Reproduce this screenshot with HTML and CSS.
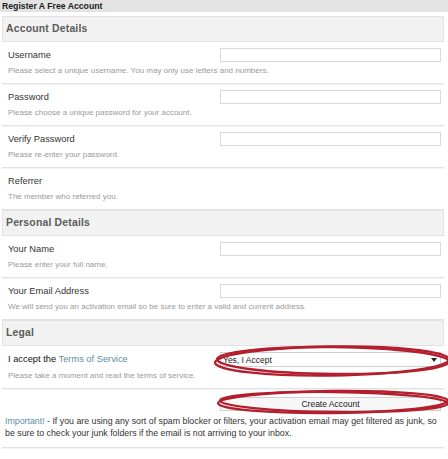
FILE: index.html
```html
<!DOCTYPE html>
<html>
<head>
<meta charset="utf-8">
<title>Register A Free Account</title>
<link rel="stylesheet" href="styles.css">
</head>
<body>
<div class="page">
  <div class="titlebar">Register A Free Account</div>
  <form class="form">
    <div class="section-head">Account Details</div>
    <div class="row">
      <label class="label">Username</label>
      <input class="field" type="text">
      <p class="desc">Please select a unique username. You may only use letters and numbers.</p>
    </div>
    <div class="row">
      <label class="label">Password</label>
      <input class="field" type="password">
      <p class="desc">Please choose a unique password for your account.</p>
    </div>
    <div class="row">
      <label class="label">Verify Password</label>
      <input class="field" type="password">
      <p class="desc">Please re-enter your password.</p>
    </div>
    <div class="row">
      <label class="label">Referrer</label>
      <p class="desc">The member who referred you.</p>
    </div>

    <div class="section-head">Personal Details</div>
    <div class="row">
      <label class="label">Your Name</label>
      <input class="field" type="text">
      <p class="desc">Please enter your full name.</p>
    </div>
    <div class="row">
      <label class="label">Your Email Address</label>
      <input class="field" type="text">
      <p class="desc">We will send you an activation email so be sure to enter a valid and current address.</p>
    </div>

    <div class="section-head legal-head">Legal</div>
    <div class="row legal-row">
      <label class="label strong">I accept the <span class="link">Terms of Service</span></label>
      <div class="select"><span>Yes, I Accept</span><span class="arrow"></span></div>
      <p class="desc">Please take a moment and read the terms of service.</p>
    </div>
    <div class="submit-row">
      <div class="btn-wrap"><button class="btn" type="button">Create Account</button></div>
      <p class="note"><span class="link">Important!</span> - If you are using any sort of spam blocker or filters, your activation email may get filtered as junk, so be sure to check your junk folders if the email is not arriving to your inbox.</p>
    </div>
  </form>
  <svg class="annot" width="448" height="459" viewBox="0 0 448 459">
    <g fill="none" stroke="#b31f2e" stroke-width="2.4">
      <ellipse cx="332" cy="361" rx="117" ry="14.5" transform="rotate(-0.8 332 361)"/>
      <ellipse cx="333" cy="360.5" rx="116" ry="13.5" transform="rotate(0.6 333 360)"/>
      <ellipse cx="333" cy="402" rx="115" ry="11" transform="rotate(-0.6 333 402)"/>
      <ellipse cx="334" cy="402" rx="114" ry="10" transform="rotate(0.7 334 402)"/>
    </g>
  </svg>
</div>
</body>
</html>
```

FILE: styles.css
```css
* { box-sizing: border-box; }
html, body { margin: 0; padding: 0; background: #fff; }
body { font-family: "Liberation Sans", Arial, sans-serif; color: #333; }

.page { position: relative; width: 448px; height: 459px; overflow: hidden; }

.titlebar {
  height: 12px;
  line-height: 12px;
  background: #e3e3e3;
  font-size: 8.7px;
  font-weight: bold;
  color: #222;
  padding-left: 2px;
}

.form { margin: 4px 0 0 0; }

.section-head {
  margin: 0 4px 0 2px;
  height: 26px;
  line-height: 24px;
  border: 1px solid #e3e3e3;
  background: #f2f2f2;
  padding-left: 3px;
  font-size: 10.4px;
  font-weight: bold;
  color: #5b5b5b;
  letter-spacing: 0.2px;
}

.row {
  margin: 0 4px 0 2px;
  display: grid;
  grid-template-columns: 1fr 221px;
  align-items: start;
  padding: 6px 3px 7px 6px;
  border-bottom: 1px solid #e2e2e2;
  box-shadow: 0 1px 0 #f3f3f3;
}

.label {
  grid-column: 1;
  font-size: 9.3px;
  line-height: 14px;
  color: #333;
}
.label.strong { color: #111; }

.field, .select {
  grid-column: 2;
  grid-row: 1;
  width: 221px;
  height: 14px;
  margin: 0;
  padding: 0 3px;
  border: 1px solid #d9d9d9;
  background: #fff;
  font-family: inherit;
  font-size: 8px;
  outline: none;
}

.desc {
  grid-column: 1 / -1;
  margin: 4px 0 0 0;
  font-size: 8px;
  line-height: 10px;
  color: #9a9a9a;
}

.link { color: #5d8ea6; }

.legal-row { padding-top: 6px; }
.select {
  height: 15px;
  display: flex;
  align-items: center;
  justify-content: space-between;
  font-size: 8.5px;
  color: #222;
  padding: 0 3px 0 2px;
  border-color: #cfcfcf;
}
.arrow {
  width: 0;
  height: 0;
  border-left: 3px solid transparent;
  border-right: 3px solid transparent;
  border-top: 4px solid #222;
}

.submit-row {
  margin: 0 4px 0 2px;
  padding: 8px 0 8px 3px;
  border-bottom: 1px solid #e2e2e2;
  box-shadow: 0 1px 0 #f3f3f3;
}
.btn-wrap { display: flex; justify-content: flex-end; padding-right: 3px; }
.btn {
  width: 221px;
  height: 14px;
  margin: 0;
  padding: 0;
  border: 1px solid #d0d0d0;
  background: #f7f7f7;
  font-family: inherit;
  font-size: 8.5px;
  line-height: 12px;
  color: #222;
}
.note {
  margin: 4px -4px 0 0;
  font-size: 8.8px;
  line-height: 12px;
  color: #333;
}

.annot { position: absolute; left: 0; top: 0; pointer-events: none; }
```
